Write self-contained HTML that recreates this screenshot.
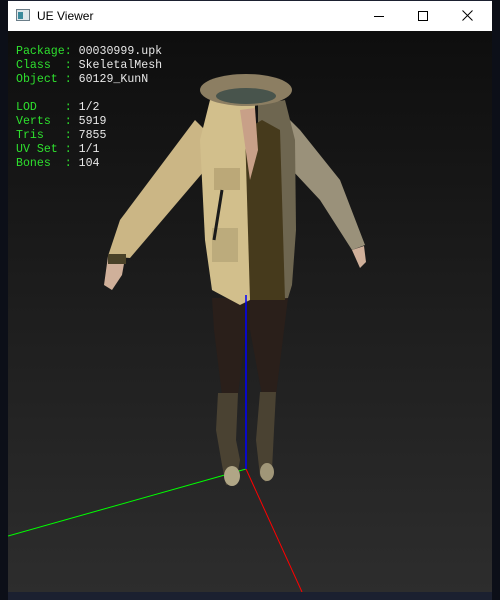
<!DOCTYPE html>
<html><head><style>
html,body{margin:0;padding:0;width:500px;height:600px;overflow:hidden;background:#1b2030;}
.strip{position:absolute;top:0;height:600px;width:8px;background:#0c0f18;}
#win{position:absolute;left:8px;top:1px;width:484px;height:591px;background:#fff;}
#title{position:absolute;left:0;top:0;width:484px;height:30px;background:#fff;font-family:"Liberation Sans",sans-serif;font-size:12px;color:#000;}
#vp{position:absolute;left:0;top:30px;width:484px;height:561px;background:linear-gradient(#0e0e0e,#2d2d2d);overflow:hidden;}
#info{position:absolute;left:8px;top:14px;font-family:"Liberation Mono",monospace;font-size:11.6px;line-height:14px;color:#2ee02e;white-space:pre;}
#info b{font-weight:normal;color:#e8e8e8;}
</style></head><body>
<div class="strip" style="left:0"></div>
<div class="strip" style="left:492px"></div>
<div id="win">
 <div id="title">
  <svg style="position:absolute;left:8px;top:8px" width="14" height="12"><rect x="0.5" y="0.5" width="13" height="11" fill="#dfe6ea" stroke="#6b7d88"/><rect x="2" y="3" width="5" height="7" fill="#3c8a9c"/></svg>
  <span style="position:absolute;left:29px;top:8px">UE Viewer</span>
  <div style="position:absolute;left:366px;top:15px;width:10px;height:1px;background:#000"></div>
  <div style="position:absolute;left:410px;top:10px;width:8px;height:8px;border:1px solid #000"></div>
  <svg style="position:absolute;left:454px;top:9px" width="11" height="11"><path d="M0.5 0.5L10.5 10.5M10.5 0.5L0.5 10.5" stroke="#000" stroke-width="1"/></svg>
 </div>
 <div id="vp">
<div id="info">Package: <b>00030999.upk</b>
Class  : <b>SkeletalMesh</b>
Object : <b>60129_KunN</b>

LOD    : <b>1/2</b>
Verts  : <b>5919</b>
Tris   : <b>7855</b>
UV Set : <b>1/1</b>
Bones  : <b>104</b></div>
<svg style="position:absolute;left:-8px;top:-31px" width="500" height="600">
 <line x1="246" y1="469" x2="8" y2="536" stroke="#00ff00" stroke-width="1"/>
 <line x1="246" y1="469" x2="302" y2="592" stroke="#ff0000" stroke-width="1"/>
 <polygon points="212,298 288,298 284,330 276,395 262,395 250,330 246,330 238,395 222,395 214,330" fill="#2a1f1a"/>
 <polygon points="218,393 238,393 236,440 240,460 236,482 226,485 222,465 216,430" fill="#4a4232"/>
 <polygon points="260,392 276,392 274,430 272,470 266,482 260,476 256,440" fill="#4a4232"/>
 <ellipse cx="232" cy="476" rx="8" ry="10" fill="#b0a686"/>
 <ellipse cx="267" cy="472" rx="7" ry="9" fill="#a09678"/>
 <polygon points="195,120 215,140 205,170 130,258 108,256 120,220" fill="#cbb685"/>
 <polygon points="290,120 300,130 340,180 365,245 352,250 320,200 292,170" fill="#9a917a"/>
 <polygon points="108,256 125,258 122,275 112,290 104,285" fill="#d0b09a"/>
 <polygon points="352,250 364,246 366,262 360,268" fill="#d0b09a"/>
 <rect x="108" y="254" width="18" height="10" fill="#4a4228"/>
 <polygon points="210,100 255,105 250,300 240,305 212,290 205,240 200,140" fill="#d2bf8c"/>
 <polygon points="258,105 285,100 295,140 296,230 292,285 288,298 258,300" fill="#6e6650"/>
 <polygon points="245,130 262,120 280,130 285,300 250,300" fill="#463a1c"/>
 <polygon points="240,110 255,108 258,150 250,180" fill="#c8a088"/>
 <rect x="214" y="168" width="26" height="22" fill="#bba878"/>
 <rect x="212" y="228" width="26" height="34" fill="#bcab7c"/>
 <line x1="222" y1="190" x2="214" y2="240" stroke="#1a1a1a" stroke-width="3"/>
 <ellipse cx="246" cy="90" rx="46" ry="16" fill="#8c7e62"/>
 <ellipse cx="246" cy="96" rx="30" ry="8" fill="#48544c"/>
 <line x1="246" y1="295" x2="246" y2="469" stroke="#0000ff" stroke-width="1.5"/>
</svg>
 </div>
</div>
</body></html>
